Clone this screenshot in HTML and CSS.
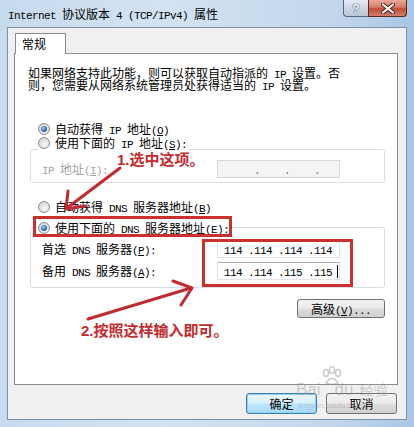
FILE: index.html
```html
<!DOCTYPE html>
<html lang="zh-CN">
<head>
    <meta charset="UTF-8">
    <meta name="viewport" content="width=device-width, initial-scale=1.0">
    <title>Internet 协议版本 4 (TCP/IPv4) 属性</title>
    <link rel="stylesheet" href="styles.css">
</head>
<body>
<div class="window">
    <!-- title bar -->
    <div class="titlebar">
        <span class="title"><span class="m">Internet </span>协议版本<span class="m"> 4 (TCP/IPv4) </span>属性</span>
        <div class="caption">
            <span class="cap-help">?</span>
            <span class="cap-close">
                <svg width="14" height="11" viewBox="0 0 14 11">
                    <path d="M2 1.5 L12 9.5 M12 1.5 L2 9.5" stroke="#4a1c16" stroke-width="4" stroke-linecap="round"/>
                    <path d="M2 1.5 L12 9.5 M12 1.5 L2 9.5" stroke="#fff" stroke-width="2.2" stroke-linecap="round"/>
                </svg>
            </span>
        </div>
    </div>

    <div class="client">
        <div class="tabs"><span class="tab">常规</span></div>

        <div class="panel">
            <p class="intro">如果网络支持此功能，则可以获取自动指派的<span class="m"> IP </span>设置。否<br>则，您需要从网络系统管理员处获得适当的<span class="m"> IP </span>设置。</p>

            <div class="radio-row first"><span class="radio checked"></span><span>自动获得<span class="m"> IP </span>地址<span class="m">(<u>O</u>)</span></span></div>
            <div class="radio-row"><span class="radio"></span><span>使用下面的<span class="m"> IP </span>地址<span class="m">(<u>S</u>):</span></span></div>
            <div class="group group-ip">
                <div class="field disabled">
                    <span class="field-label"><span class="m">IP </span>地址<span class="m">(<u>I</u>):</span></span>
                    <span class="ipbox off"><span class="m">     .    .    .</span></span>
                </div>
            </div>

            <div class="radio-row dns-auto"><span class="radio"></span><span>自动获得<span class="m"> DNS </span>服务器地址<span class="m">(<u>B</u>)</span></span></div>
            <div class="radio-row dns-manual"><span class="radio checked"></span><span>使用下面的<span class="m"> DNS </span>服务器地址<span class="m">(<u>E</u>):</span></span></div>
            <div class="group group-dns">
                <div class="field">
                    <span class="field-label">首选<span class="m"> DNS </span>服务器<span class="m">(<u>P</u>):</span></span>
                    <span class="ipbox"><span class="m">114 .114 .114 .114</span></span>
                </div>
                <div class="field">
                    <span class="field-label">备用<span class="m"> DNS </span>服务器<span class="m">(<u>A</u>):</span></span>
                    <span class="ipbox"><span class="m">114 .114 .115 .115</span><span class="caret"></span></span>
                </div>
            </div>

            <div class="adv-row"><button class="btn">高级<span class="m">(<u>V</u>)...</span></button></div>
        </div>

        <div class="footer">
            <button class="btn btn-default">确定</button>
            <button class="btn">取消</button>
        </div>
    </div>

    <!-- hand-drawn notes on top of the dialog -->
    <div class="mark mark-radio"></div>
    <div class="mark mark-dns"></div>
    <span class="note note-1">1.选中这项。</span>
    <span class="note note-2">2.按照这样输入即可。</span>
    <svg class="arrows" width="414" height="427" viewBox="0 0 414 427">
        <g fill="none" stroke="#c32a2f" stroke-width="3" stroke-linecap="round" stroke-linejoin="round">
            <path d="M120 168 L67 208"/>
            <path d="M68 191 L66 209 L85 206"/>
            <path d="M88 319 L191 288"/>
            <path d="M173 281 L192 288 L181 305"/>
        </g>
    </svg>

    <!-- site watermark -->
    <div class="watermark">
        <svg class="paw" width="24" height="20" viewBox="0 0 24 20">
            <g fill="none" stroke="rgba(150,150,150,0.5)" stroke-width="1.5">
                <ellipse cx="6" cy="7" rx="2.5" ry="3.5"/>
                <ellipse cx="12" cy="4" rx="2.5" ry="3.5"/>
                <ellipse cx="18" cy="7" rx="2.5" ry="3.5"/>
                <path d="M6 17 Q12 8 18 17 Q12 20 6 17 Z"/>
            </g>
        </svg>
        <span class="wm-main">Bai<span class="wm-gap"></span>du<span class="wm-cn">经验</span></span>
        <span class="wm-url">jingyan.baidu.com</span>
    </div>
</div>
</body>
</html>
```

FILE: styles.css
```css
* {
    box-sizing: border-box;
}
body {
    margin: 0;
    padding: 0;
    font-family: "Noto Sans CJK SC", sans-serif;
    font-size: 12px;
    color: #000;
}
/* latin runs in the dialog use a narrow fixed-width face */
.m {
    font-family: "Liberation Mono", "Noto Sans CJK SC", monospace;
    font-size: 11px;
    letter-spacing: -0.6px;
    line-height: 0;
}
u {
    text-decoration: underline;
    text-underline-offset: 1px;
}

.window {
    position: relative;
    width: 414px;
    height: 427px;
    overflow: hidden;
    display: flex;
    flex-direction: column;
    background: linear-gradient(to right, #c7dbef 0%, #d3e2f2 40%, #c3d7ec 80%, #a9c6e6 100%);
}

/* title bar */
.titlebar {
    height: 27px;
    display: flex;
    align-items: flex-start;
}
.title {
    margin-left: 8px;
    line-height: 28px;
    white-space: nowrap;
}
.caption {
    display: flex;
    margin-left: auto;
    margin-right: 7px;
}
.cap-help,
.cap-close {
    height: 17px;
    display: flex;
    align-items: center;
    justify-content: center;
    border: 1px solid #56657a;
    border-top: none;
}
.cap-help {
    width: 25px;
    border-right: none;
    border-bottom-left-radius: 4px;
    background: linear-gradient(#e4ebf3, #c9d4e1 55%, #b9c7d7);
    color: #f4f6f8;
    font-family: "Liberation Sans", sans-serif;
    font-weight: bold;
    font-size: 13px;
    text-shadow: 0 0 1px #3c4654, 0 0 1px #3c4654;
}
.cap-close {
    width: 39px;
    border-color: #5c2a25;
    border-bottom-right-radius: 4px;
    background: linear-gradient(#e9a99a, #d47b68 45%, #c24a35 55%, #d0806c);
}

/* client area */
.client {
    flex: 1;
    margin: 0 7px 7px 7px;
    background: #f0f0f0;
    border: 1px solid #7d90a5;
    display: flex;
    flex-direction: column;
}
.tabs {
    display: flex;
    padding: 5px 0 0 7px;
}
.tab {
    position: relative;
    z-index: 1;
    width: 51px;
    height: 21px;
    margin-bottom: -1px;
    padding-left: 6px;
    border: 1px solid #898c95;
    border-bottom: none;
    background: #fff;
    line-height: 19px;
    font-size: 12px;
}
.panel {
    height: 332px;
    margin: 0 8px 0 6px;
    padding: 0 12px 0 13px;
    border: 1px solid #898c95;
    background: #fff;
    display: flex;
    flex-direction: column;
}
.intro {
    margin: 13px 0 0 0;
    height: 24px;
    line-height: 12px;
    white-space: nowrap;
}

/* radio buttons */
.radio-row {
    position: relative;
    z-index: 1;
    display: flex;
    align-items: center;
    width: fit-content;
    height: 14px;
    margin-left: 10px;
    padding-right: 2px;
    background: #fff;
    line-height: 14px;
    white-space: nowrap;
}
.radio-row.first {
    margin-top: 31px;
}
.radio-row.dns-auto {
    margin-top: 17px;
}
.radio-row.dns-manual {
    margin-top: 7px;
}
.radio {
    width: 12px;
    height: 12px;
    margin-right: 5px;
    border-radius: 50%;
    border: 1px solid #8f8f8f;
    background: radial-gradient(circle at 60% 65%, #f8f8f8 0%, #e2e2e2 50%, #c9c9c9 100%);
    position: relative;
}
.radio.checked::after {
    content: "";
    position: absolute;
    left: 2px;
    top: 2px;
    width: 6px;
    height: 6px;
    border-radius: 50%;
    background: radial-gradient(circle at 40% 35%, #a6d4f2 0%, #2d6db0 55%, #173e6d 100%);
}

/* group boxes */
.group {
    margin-left: 2px;
    border: 1px solid #d5dfe5;
    border-radius: 3px;
    padding-left: 11px;
}
.group-ip {
    margin-top: -1px;
    padding-top: 10px;
    padding-bottom: 4px;
}
.group-dns {
    margin-top: -8px;
    padding-top: 12px;
    padding-bottom: 7px;
    display: flex;
    flex-direction: column;
    gap: 4px;
}
.field {
    display: flex;
    align-items: center;
    height: 18px;
    line-height: 16px;
    white-space: nowrap;
}
.field-label {
    width: 175px;
}
.field.disabled .field-label {
    color: #a3a3a3;
}
.ipbox {
    position: relative;
    width: 123px;
    height: 18px;
    padding-left: 6px;
    border: 1px solid #e2e3ea;
    border-top-color: #abadb3;
    background: #fff;
    line-height: 16px;
    white-space: pre;
}
.ipbox .m {
    line-height: 16px;
}
.ipbox.off {
    background: #f4f4f4;
    border-color: #d9d9d9;
    color: #6d6d6d;
}
.caret {
    position: absolute;
    left: 119px;
    top: 2px;
    width: 1px;
    height: 13px;
    background: #000;
}

/* buttons */
.btn {
    height: 19px;
    padding: 0;
    border: 1px solid #707070;
    border-radius: 3px;
    background: linear-gradient(#f2f2f2 0%, #ebebeb 48%, #dddddd 52%, #cfcfcf 100%);
    font-family: "Noto Sans CJK SC", sans-serif;
    font-size: 12px;
    line-height: 17px;
    color: #000;
}
.adv-row {
    display: flex;
    justify-content: flex-end;
    margin-top: 11px;
}
.adv-row .btn {
    width: 88px;
}
.footer {
    display: flex;
    justify-content: flex-end;
    gap: 9px;
    margin-top: 8px;
    padding-right: 9px;
}
.footer .btn {
    width: 71px;
    height: 21px;
    line-height: 19px;
}
.btn-default {
    border-color: #3c7fb1;
    background: linear-gradient(#eaf6fd 0%, #d9f0fc 48%, #bee6fd 52%, #a7d9f5 100%);
    box-shadow: inset 0 0 0 1px #8fd0f6;
}

/* annotations */
.mark,
.note,
.arrows,
.watermark {
    z-index: 5;
}
.mark {
    position: absolute;
    border: 3px solid #c9302e;
}
.mark-radio {
    left: 33px;
    top: 216px;
    width: 199px;
    height: 21px;
}
.mark-dns {
    left: 202px;
    top: 239px;
    width: 151px;
    height: 48px;
}
.note {
    position: absolute;
    color: #c42b2f;
    font-family: "Liberation Sans", "Noto Sans CJK SC", sans-serif;
    font-weight: bold;
    font-size: 15px;
    line-height: 18px;
    white-space: nowrap;
}
.note-1 {
    left: 117px;
    top: 151px;
}
.note-2 {
    left: 81px;
    top: 322px;
}
.arrows {
    position: absolute;
    left: 0;
    top: 0;
}

/* watermark */
.watermark {
    position: absolute;
    left: 296px;
    top: 366px;
    width: 90px;
    color: rgba(150, 150, 150, 0.45);
}
.paw {
    position: absolute;
    left: 24px;
    top: 0;
}
.wm-main {
    position: absolute;
    left: 0;
    top: 14px;
    font-family: "Liberation Sans", "Noto Sans CJK SC", sans-serif;
    font-size: 17px;
    line-height: 20px;
    white-space: nowrap;
}
.wm-gap {
    display: inline-block;
    width: 14px;
}
.wm-cn {
    margin-left: 6px;
    font-size: 14px;
}
.wm-url {
    position: absolute;
    left: 2px;
    top: 35px;
    font-family: "Liberation Sans", sans-serif;
    font-size: 8px;
    white-space: nowrap;
}
```
